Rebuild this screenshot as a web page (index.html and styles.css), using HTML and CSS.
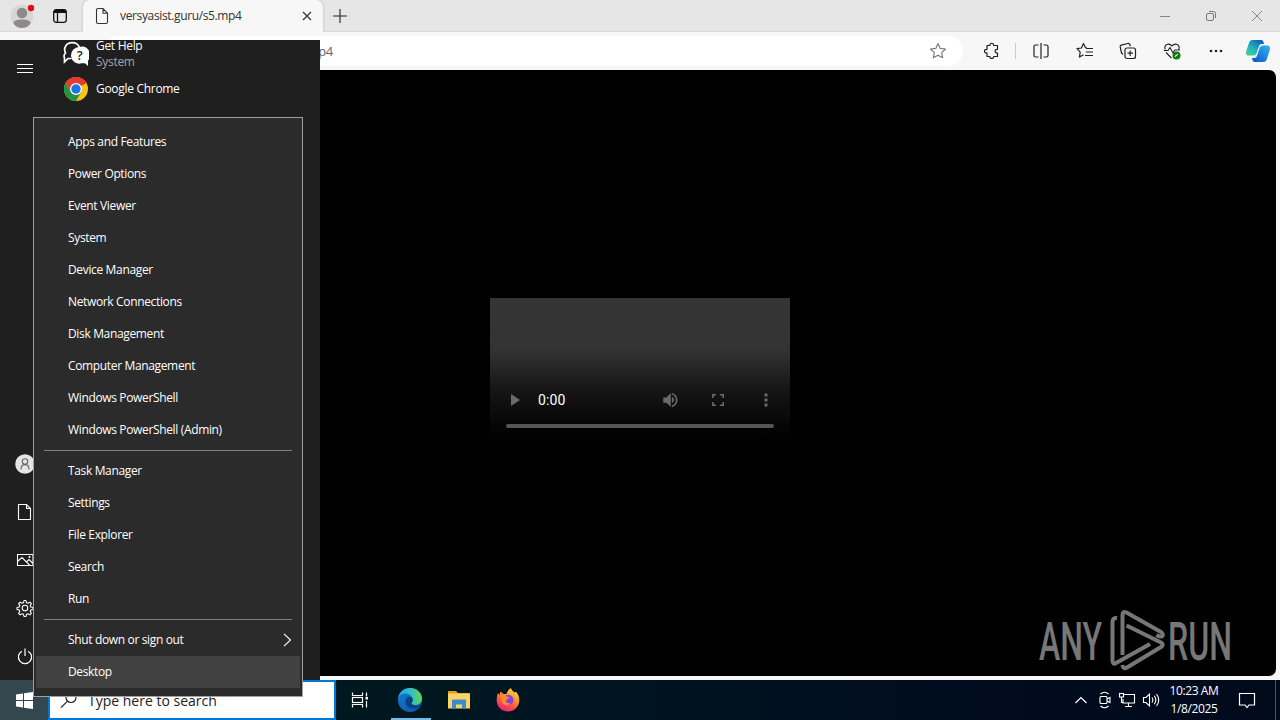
FILE: index.html
```html
<!DOCTYPE html>
<html lang="en">
<head>
    <meta charset="UTF-8">
    <meta name="viewport" content="width=device-width, initial-scale=1.0">
    <title>versyasist.guru/s5.mp4</title>
    <link rel="stylesheet" href="styles.css">
</head>
<body>
    <div class="desktop">
        <div class="browser">
            <div class="tabbar">
                <div class="profile">
                    <svg width="26" height="26" viewBox="0 0 26 26"><circle cx="13" cy="13" r="11.5" fill="#d8d6d4"/><circle cx="13" cy="10" r="5.2" fill="#8d8b89"/><path d="M4.500 20.500c0-3 3.500-4 8.500-4s8.500 1 8.500 4c-2 3-5 4.500-8.500 4.500s-6.500-1.500-8.500-4.500z" fill="#8d8b89"/><circle cx="22" cy="5" r="3.200" fill="#e00b1c"/></svg>
                </div>
                <div class="tab-actions">
                    <svg width="16" height="16" viewBox="0 0 16 16" fill="none" stroke="#111" stroke-width="1.300"><rect x="1.700" y="1.700" width="12.600" height="12.600" rx="2.500"/><path d="M2 3.500h12" stroke-width="3"/><path d="M5.500 4v10"/></svg>
                </div>
                <div class="tab">
                    <svg width="14" height="18" viewBox="0 0 14 18" fill="none" stroke="#333" stroke-width="1.100"><path d="M3 1.500h5l4.500 4.800v8.700c0 .8-.5 1.500-1.500 1.500H3c-1 0-1.500-.7-1.500-1.500V3c0-1 .6-1.500 1.500-1.500zM8 1.500v4.800h4.500"/></svg>
                    <span class="tab-title">versyasist.guru/s5.mp4</span>
                    <svg class="tab-close" width="10" height="10" viewBox="0 0 10 10" stroke="#333" stroke-width="1.200"><path d="M1 1l8 8M9 1l-8 8"/></svg>
                </div>
                <svg class="new-tab" width="14" height="14" viewBox="0 0 14 14" stroke="#222" stroke-width="1.100"><path d="M7 0v14M0 7h14"/></svg>
                <div class="window-buttons">
                    <svg width="12" height="12" viewBox="0 0 12 12" fill="none" stroke="#888"><path d="M1 6.500h10"/></svg>
                    <svg width="12" height="12" viewBox="0 0 12 12" fill="none" stroke="#777"><rect x="1.500" y="3.500" width="7" height="7" rx="1.500"/><path d="M4 1.500h4.500q2 0 2 2V8"/></svg>
                    <svg width="12" height="12" viewBox="0 0 12 12" fill="none" stroke="#888"><path d="M1 1l10 10M11 1L1 11"/></svg>
                </div>
            </div>
            <div class="toolbar">
                <div class="address">
                    <span class="url">https://versyasist.guru/s5.mp4</span>
                    <svg width="18" height="18" viewBox="0 0 18 18" fill="none" stroke="#777" stroke-width="1.100" stroke-linejoin="round"><path d="M9 1.500l2.200 4.900 5.300.6-3.900 3.600 1.100 5.200L9 13.200l-4.700 2.600 1.100-5.200L1.500 7l5.300-.6z"/></svg>
                </div>
                <div class="tools">
                    <svg width="18" height="18" viewBox="0 0 18 18" fill="none" stroke="#222" stroke-width="1.200" stroke-linejoin="round"><path d="M4 3.500h2.800c-.2-3 4.100-3 3.900 0h3.800v3.800c-3.200-.2-3.200 3.900 0 3.700v3.500h-3.800c.2 2.600-4.100 2.600-3.900 0H4V11c-3.400.2-3.400-3.900 0-3.700z"/></svg>
                    <span class="tool-divider"></span>
                    <svg width="18" height="18" viewBox="0 0 18 18" fill="none" stroke="#222" stroke-width="1.200"><path d="M6.500 3H3.500C2.500 3 2 3.500 2 4.500v9c0 1 .5 1.500 1.500 1.500h3M11.500 3h3c1 0 1.500.5 1.500 1.500v9c0 1-.5 1.500-1.500 1.500h-3M9 1v16"/></svg>
                    <svg width="18" height="18" viewBox="0 0 18 18" fill="none" stroke="#222" stroke-width="1.200" stroke-linejoin="round"><path d="M11 6L9.500 5.700 7.500 1.500 5.400 6 1 6.700l3.200 3.400-.8 5L7.500 12.700M10 6.500h7M10 10h7M9 13.500h8"/></svg>
                    <svg width="18" height="18" viewBox="0 0 18 18" fill="none" stroke="#222" stroke-width="1.200"><rect x="6" y="6" width="10.500" height="10.500" rx="2"/><path d="M11.200 8.500v5.500M8.500 11.200H14M4 12.500L2.500 11 1.200 5c-.2-1 .2-1.700 1.100-1.900l6.500-1.600c1-.2 1.800.3 2.100 1.300l.5 1.400"/></svg>
                    <svg width="18" height="18" viewBox="0 0 18 18" fill="none" stroke="#222" stroke-width="1.100"><path d="M2.200 7.500C.5 2.500 6 .3 9 4c3-3.700 8.500-1.500 6.800 3.500M1 8.500h4l2-3 3 5.500 1.800-3H17M3 10.500l5.500 5.500"/><circle cx="13.500" cy="13.500" r="4" fill="#107c10" stroke="none"/><path d="M11.800 14.700l3-2.500" stroke="#fff"/></svg>
                    <svg width="18" height="18" viewBox="0 0 18 18" fill="#222"><circle cx="4" cy="9" r="1.300"/><circle cx="9" cy="9" r="1.300"/><circle cx="14" cy="9" r="1.300"/></svg>
                    <svg class="copilot" width="26" height="26" viewBox="0 0 26 26">
                        <defs>
                            <linearGradient id="cpA" x1="0" y1="1" x2=".7" y2="0"><stop offset="0" stop-color="#4fd37b"/><stop offset=".45" stop-color="#22b9bd"/><stop offset="1" stop-color="#1164b8"/></linearGradient>
                            <linearGradient id="cpB" x1="0" y1="1" x2="1" y2="0"><stop offset="0" stop-color="#0754c8"/><stop offset="1" stop-color="#34b5f4"/></linearGradient>
                        </defs>
                        <path d="M8 2h8c2 0 2.500 1.500 3 4h-2c-2 0-2.700 1-3.300 3l-2 6c-.6 2-1.700 2.500-4 2.500H4C1 17.500.5 15.500 1.300 13l2.500-7.500C4.700 3 5.500 2 8 2z" fill="url(#cpA)"/>
                        <path d="M18 24h-8c-2 0-2.500-1.500-3-4h2c2 0 2.700-1 3.300-3l2-6c.6-2 1.700-3.500 4-3.500H22c3 0 3.500 2 2.700 5l-2.500 7.500C21.300 23 20.500 24 18 24z" fill="url(#cpB)"/>
                    </svg>
                </div>
            </div>
            <div class="page">
                <div class="video">
                    <div class="controls">
                        <svg class="play" width="24" height="24" viewBox="0 0 24 24" fill="#6a6a6a"><path d="M8 6v12l9-6z"/></svg>
                        <span class="time">0:00</span>
                        <svg width="18" height="18" viewBox="0 0 24 24" fill="#6a6a6a"><path d="M3 8.500v7h4l6 5.500V3L7 8.500zM14.500 7.800v8.400c1.800-.9 2.800-2.400 2.800-4.200s-1-3.300-2.800-4.200zM14.500 2.500v2.300c3.200.9 5.300 3.700 5.300 7.200s-2.100 6.300-5.300 7.200v2.300c4.500-1 7.500-4.800 7.500-9.500s-3-8.500-7.500-9.500z"/></svg>
                        <svg width="18" height="18" viewBox="0 0 18 18" fill="none" stroke="#6a6a6a" stroke-width="1.600"><path d="M3.800 7V3.800H7M11 3.800h3.200V7M14.200 11v3.200H11M7 14.200H3.800V11"/></svg>
                        <svg width="18" height="18" viewBox="0 0 18 18" fill="#6a6a6a"><circle cx="9" cy="4" r="1.700"/><circle cx="9" cy="9" r="1.700"/><circle cx="9" cy="14" r="1.700"/></svg>
                    </div>
                    <div class="timeline"></div>
                </div>
                <svg class="watermark" width="200" height="66" viewBox="0 0 200 66">
                    <g fill="#777" font-family="Roboto, sans-serif" font-size="53" font-weight="500">
                        <text x="2" y="51.500" textLength="63" lengthAdjust="spacingAndGlyphs">ANY</text>
                        <text x="131" y="51.500" textLength="64" lengthAdjust="spacingAndGlyphs">RUN</text>
                    </g>
                    <g fill="none" stroke="#777" stroke-width="4" stroke-linejoin="round" stroke-linecap="butt">
                        <path d="M80 10q-4.500-.5-4.500 4v38.500q0 4.500 3.500 2.500L113 36"/>
                        <path d="M85.500 47V7q0-4.500 4-2.500L124 24q3.500 3 .5 4.500-2 .5-5-1.500"/>
                        <path d="M89.500 17.500L124 34.500q3.500 2 0 4.500L90 59.500q-4 2.500-4.500-2.500"/>
                    </g>
                </svg>
            </div>
        </div>

        <div class="taskbar">
            <div class="start-button">
                <svg width="17" height="17" viewBox="0 0 17 17" fill="#fff"><path d="M0 2.400l7-1V8H0zM8 1.200L17 0v8H8zM0 9h7v6.600l-7-1zM8 9h9v8l-9-1.300z"/></svg>
            </div>
            <div class="search">
                <svg width="18" height="18" viewBox="0 0 18 18" fill="none" stroke="#222" stroke-width="1.200"><circle cx="11" cy="6.500" r="5"/><path d="M7.500 10.200L1 16.700"/></svg>
                <span class="search-text">Type here to search</span>
            </div>
            <div class="task">
                <svg width="18" height="18" viewBox="0 0 18 18" fill="none" stroke="#fff" stroke-width="1.200"><path d="M1.500 1.500v3h10v-3M1.500 16.500v-3h10v3M15.500 1.500v4M15.500 10v6.500"/><rect x="1.500" y="6.500" width="10" height="5"/><rect x="14.500" y="6" width="2.500" height="2.500" fill="#fff" stroke="none"/></svg>
            </div>
            <div class="task active">
                <svg width="26" height="26" viewBox="0 0 26 26">
                    <defs>
                        <linearGradient id="edA" x1="0" y1=".5" x2="1" y2=".4"><stop offset="0" stop-color="#1f9de0"/><stop offset=".5" stop-color="#2dbfd0"/><stop offset="1" stop-color="#62d64b"/></linearGradient>
                        <linearGradient id="edB" x1="0" y1="0" x2=".6" y2="1"><stop offset="0" stop-color="#1580d6"/><stop offset="1" stop-color="#0c5cae"/></linearGradient>
                    </defs>
                    <circle cx="13" cy="13" r="12" fill="url(#edB)"/>
                    <path d="M1.200 11C2 5 7 1 13 1c7 0 12 5 12 10.500 0 4-3 6.500-6.500 6.500-2.500 0-4-.8-4-1.700 0-.8 1.300-1.300 1.300-3.300C15.800 9 12 6.500 8.500 6.500 5 6.500 2.500 8.500 1.200 11z" fill="url(#edA)"/>
                    <path d="M8.500 15c0-3 1.800-5.200 4.500-5.200 1.700 1 2.800 2 2.800 3.300 0 1.700-1.300 2.300-1.300 3.200 0 1.500 3 2.700 6 2 1.500-.3 2.500-.9 3.300-1.400-1 2.700-3.500 4.500-7.300 4.500-4.500 0-8-2.500-8-6.400z" fill="#0d3f82"/>
                </svg>
            </div>
            <div class="task">
                <svg width="24" height="22" viewBox="0 0 24 22"><path d="M1 2h8l2 2h11.500v5H1z" fill="#e89c1c"/><path d="M1 4.500h22v15H1z" fill="#fbd468"/><path d="M5 19.500v-8q0-1 1-1h12q1 0 1 1v8h-4v-4H9v4z" fill="#3a8dc8"/></svg>
            </div>
            <div class="task">
                <svg width="26" height="26" viewBox="0 0 26 26">
                    <defs>
                        <linearGradient id="ffA" x1=".8" y1="0" x2=".3" y2="1"><stop offset="0" stop-color="#ffe040"/><stop offset=".4" stop-color="#ff9428"/><stop offset=".75" stop-color="#ff4150"/><stop offset="1" stop-color="#e3227a"/></linearGradient>
                    </defs>
                    <path d="M3 6l1.500 2L5.500 4.500 8.500 7h3c1-3 2.500-5 4.500-6 .2 2 2 3 3.500 4.500L21 4.800c2 2.300 3.500 5 3.300 8.700C24 20 19 24.500 13 24.500S1.700 20 1.700 13.500C1.700 10.500 2 8.500 3 6z" fill="url(#ffA)"/>
                    <circle cx="13.500" cy="13" r="5" fill="#7c45dc"/>
                    <path d="M5 10c2-2 5-2 7-.5l2.500 1c-.8 1.800-3 1.500-3.500 3-.3 2 2 3.200 4.500 2.500-1.500 3.500-8 3-9-2z" fill="#ff8a2a"/>
                </svg>
            </div>
            <div class="tray">
                <svg width="14" height="18" viewBox="0 0 14 18" fill="none" stroke="#fff" stroke-width="1.200"><path d="M1.500 12L7 6.500l5.500 5.500"/></svg>
                <svg width="14" height="18" viewBox="0 0 14 18" fill="none" stroke="#fff" stroke-width="1.100"><rect x="2" y="5.500" width="7" height="7" rx="1"/><path d="M9 8l3-1.500v5L9 10M2.500 3q4-3.500 8 0M2.500 15q4 3.500 8 0"/></svg>
                <svg width="18" height="18" viewBox="0 0 18 18" fill="none" stroke="#fff" stroke-width="1.100"><path d="M6 3.500h10.500v8.500H5V8M10.500 12v3.500M7 15.500h7"/><rect x="1.500" y="2.500" width="4" height="3.500"/><path d="M3.500 6v5.500h1.500"/></svg>
                <svg width="18" height="18" viewBox="0 0 18 18" fill="none" stroke="#fff" stroke-width="1.100"><path d="M1.500 6.500H4l3.500-3.500v12L4 11.500H1.500zM10 6.500q1.700 2.500 0 5M12.300 4.800q3 4.200 0 8.400M14.500 3q4.500 6 0 12"/></svg>
                <div class="clock">
                    <span>10:23 AM</span>
                    <span>1/8/2025</span>
                </div>
                <svg class="notify" width="18" height="18" viewBox="0 0 18 18" fill="none" stroke="#fff" stroke-width="1.200"><path d="M1.500 2.500h15v11.500H11l-2 2.500-2-2.500H1.500z"/></svg>
            </div>
        </div>

        <div class="start-menu">
            <div class="rail">
                <svg class="burger" width="16" height="10" viewBox="0 0 16 10" stroke="#fff"><path d="M0 .5h16M0 4.500h16M0 8.500h16"/></svg>
                <div class="rail-bottom">
                    <svg width="20" height="20" viewBox="0 0 20 20" fill="none"><circle cx="10" cy="10" r="9.800" fill="#e4e4e4"/><g stroke="#666" stroke-width="1.100"><circle cx="10" cy="7.500" r="2.700"/><path d="M6 15.500c0-6.500 8-6.500 8 0"/></g></svg>
                    <svg width="20" height="20" viewBox="0 0 20 20" fill="none" stroke="#fff" stroke-width="1.100"><path d="M3.500 2.500h8l4 4v11h-12zM11.500 2.500v4h4"/></svg>
                    <svg width="20" height="20" viewBox="0 0 20 20" fill="none" stroke="#fff" stroke-width="1.100"><path d="M2.500 4.500h15.500v11H2.500zM2.500 11.500L7 7.500l8 8M11.500 12l2.500-2.500 4 4"/><circle cx="14.500" cy="7" r=".5"/></svg>
                    <svg width="20" height="20" viewBox="0 0 20 20" fill="none" stroke="#fff" stroke-width="1.100" stroke-linejoin="round"><circle cx="10" cy="10" r="2.800"/><path d="M9 2.500h2l.5 2.200 1.500.6 1.900-1.200 1.500 1.500L15.200 7.500l.6 1.500 2.200.5v2l-2.200.5-.6 1.500 1.200 1.900-1.500 1.500-1.900-1.200-1.500.6-.5 2.200H9l-.5-2.200-1.500-.6-1.900 1.200-1.500-1.500 1.200-1.900-.6-1.500L2 11.500v-2L4.200 9l.6-1.500-1.200-1.900 1.500-1.500L7 5.300l1.500-.6z"/></svg>
                    <svg width="20" height="20" viewBox="0 0 20 20" fill="none" stroke="#fff" stroke-width="1.200"><path d="M7 5.200a6.600 6.600 0 1 0 6 0M10 2.500V10"/></svg>
                </div>
            </div>
            <div class="app-list">
                <div class="app">
                    <svg width="26" height="26" viewBox="0 0 26 26"><path d="M8.500 17.500H5L1.500 21V17C.8 15.500 1 13.500 2.500 12 0 7 3.500 1.700 9 1.700c3.500 0 6.500 2 7.500 5" fill="none" stroke="#fff" stroke-width="1.700"/><path d="M16.500 6a8.300 8.300 0 1 0 2 16.300h3.500l3 2.700v-5.500A8.300 8.300 0 0 0 16.500 6z" fill="#fff"/><text x="16.700" y="19" text-anchor="middle" font-family="Open Sans, sans-serif" font-size="13" font-weight="600" fill="#1f1f1f">?</text></svg>
                    <div class="app-name">Get Help<span>System</span></div>
                </div>
                <div class="app">
                    <svg width="26" height="26" viewBox="0 0 26 26"><circle cx="13" cy="13" r="12" fill="#fbc116"/><path d="M13 13L2.600 7A12 12 0 0 1 23.400 7z" fill="#e33b2e"/><path d="M13 7h10.400A12 12 0 0 0 2.600 7l5.200 9z" fill="#e33b2e"/><path d="M2.600 7a12 12 0 0 0 10.400 18l5.200-9H7.800z" fill="#229342"/><circle cx="13" cy="13" r="6" fill="#fff"/><circle cx="13" cy="13" r="4.700" fill="#1a73e8"/></svg>
                    <div class="app-name">Google Chrome</div>
                </div>
            </div>
        </div>

        <div class="context-menu">
            <div class="item">Apps and Features</div>
            <div class="item">Power Options</div>
            <div class="item">Event Viewer</div>
            <div class="item">System</div>
            <div class="item">Device Manager</div>
            <div class="item">Network Connections</div>
            <div class="item">Disk Management</div>
            <div class="item">Computer Management</div>
            <div class="item">Windows PowerShell</div>
            <div class="item">Windows PowerShell (Admin)</div>
            <div class="separator"></div>
            <div class="item">Task Manager</div>
            <div class="item">Settings</div>
            <div class="item">File Explorer</div>
            <div class="item">Search</div>
            <div class="item">Run</div>
            <div class="separator"></div>
            <div class="item">Shut down or sign out
                <svg width="9" height="14" viewBox="0 0 9 14" fill="none" stroke="#fff" stroke-width="1.100"><path d="M1 .8L7.500 7 1 13.200"/></svg>
            </div>
            <div class="item selected">Desktop</div>
        </div>
    </div>
</body>
</html>
```
FILE: styles.css
```css
* {
    box-sizing: border-box;
}

body {
    margin: 0;
    font-family: "Open Sans", "Noto Sans", sans-serif;
    font-size: 12px;
}

svg {
    display: block;
    flex: none;
}

.desktop {
    position: relative;
    display: flex;
    flex-direction: column;
    width: 1280px;
    height: 720px;
    overflow: hidden;
}

/* browser window */
.browser {
    display: flex;
    flex-direction: column;
    height: 680px;
    background: #f7f7f7;
}

.tabbar {
    display: flex;
    align-items: center;
    height: 32px;
    background: #e6e6e6;
    border-bottom: 1px solid #dadada;
}

.profile {
    margin-left: 9px;
}

.tab-actions {
    margin-left: 17px;
}

.tab {
    display: flex;
    align-items: center;
    align-self: stretch;
    width: 240px;
    height: 32px;
    margin-left: 15px;
    padding: 0 11px 0 12px;
    background: #f7f7f7;
    border-radius: 7px 7px 0 0;
    box-shadow: 0 0 3px rgba(0, 0, 0, 0.2);
    clip-path: inset(0 -4px 0 -4px);
}

.tab-title {
    margin-left: 11px;
    padding-bottom: 1px;
    color: #333;
    letter-spacing: -0.36px;
}

.tab-close {
    margin-left: auto;
}

.new-tab {
    margin-left: 10px;
}

.window-buttons {
    display: flex;
    gap: 34px;
    margin-left: auto;
    margin-right: 17px;
}

.toolbar {
    display: flex;
    align-items: center;
    height: 38px;
}

.address {
    display: flex;
    align-items: center;
    justify-content: space-between;
    width: 859px;
    height: 30px;
    margin-left: 104px;
    padding: 0 16px 0 48px;
    background: #fff;
    border-radius: 15px;
}

.url {
    width: 181px;
    text-align: right;
    font-size: 13px;
    letter-spacing: -0.3px;
    color: #666;
    white-space: nowrap;
}

.tools {
    display: flex;
    align-items: center;
    justify-content: space-between;
    flex: 1;
    padding: 0 9px 0 20px;
}

.tool-divider {
    width: 1px;
    height: 16px;
    margin: 0 -10px 0 -12px;
    background: #ccc;
}

.copilot {
    margin-left: -6px;
}

.page {
    position: relative;
    display: flex;
    align-items: center;
    justify-content: center;
    height: 606px;
    margin: 0 4px;
    background: #000;
    border-radius: 7px;
}

.video {
    display: flex;
    flex-direction: column;
    justify-content: flex-end;
    width: 300px;
    height: 150px;
    padding: 0 16px 20px;
    background: linear-gradient(#353535 0, #333 35%, #151515 62%, #050505 85%, #000 95%);
}

.controls {
    display: flex;
    align-items: center;
    gap: 30px;
    height: 24px;
    margin-right: -1px;
    margin-bottom: 12px;
}

.play {
    margin-left: -3px;
}

.time {
    flex: 1;
    margin-left: -19px;
    font-family: Roboto, sans-serif;
    font-size: 14px;
    letter-spacing: 0.15px;
    color: #fff;
}

.timeline {
    height: 4px;
    border-radius: 2px;
    background: #555;
}

.watermark {
    position: absolute;
    right: 39px;
    bottom: 2px;
}

/* taskbar */
.taskbar {
    display: flex;
    height: 40px;
    background: linear-gradient(90deg, #001a21 0, #001720 35%, #000c1f 75%, #000a1b 100%);
    color: #fff;
}

.start-button {
    display: flex;
    align-items: center;
    justify-content: center;
    width: 48px;
    background: #34474f;
}

.search {
    display: flex;
    align-items: center;
    width: 288px;
    padding: 0 10px;
    background: #fff;
    border: 2px solid #0078d7;
}

.search-text {
    margin-left: 10px;
    font-size: 14px;
    color: #222;
}

.task {
    display: flex;
    align-items: center;
    justify-content: center;
    width: 49px;
    margin-left: -1px;
}

.task + .task {
    margin-left: 0;
}

.task.active {
    position: relative;
    width: 52px;
}

.task.active + .task {
    margin-left: -2px;
}

.task.active::after {
    content: "";
    position: absolute;
    bottom: 0;
    left: 7px;
    width: 40px;
    height: 2px;
    background: #76b9ed;
}

.tray {
    display: flex;
    align-items: center;
    gap: 6px;
    margin-left: auto;
    padding-right: 19px;
    border-right: 1px solid #4b5462;
    margin-right: 4px;
}

.tray svg:first-child {
    margin-left: -6px;
    margin-right: -2px;
}

.tray svg:first-child + svg {
    margin-left: 6px;
}

.clock {
    display: flex;
    flex-direction: column;
    width: 58px;
    margin: 0 9px 0 -1px;
    line-height: 18px;
    text-align: center;
    letter-spacing: -0.4px;
    white-space: nowrap;
}

/* start menu */
.start-menu {
    position: absolute;
    top: 40px;
    left: 0;
    display: flex;
    width: 320px;
    height: 640px;
    overflow: hidden;
    background: #1f1f1f;
    color: #fff;
}

.rail {
    display: flex;
    flex-direction: column;
    justify-content: space-between;
    align-items: center;
    width: 50px;
    padding: 24px 0 14px;
}

.rail-bottom {
    display: flex;
    flex-direction: column;
    gap: 28px;
}

.app-list {
    padding-left: 13px;
}

.app {
    display: flex;
    align-items: center;
    height: 36px;
}

.app:first-child {
    height: 27px;
    margin-bottom: 4px;
}

.app-name {
    margin-left: 7px;
    line-height: 16px;
    font-weight: 500;
    letter-spacing: -0.3px;
}

.app-name span {
    display: block;
    color: #a5a5a5;
}

/* Win+X menu */
.context-menu {
    position: absolute;
    top: 117px;
    left: 33px;
    width: 270px;
    height: 580px;
    padding: 8px 2px;
    background: #2b2b2b;
    border: 1px solid #a0a0a0;
    color: #fff;
}

.item {
    display: flex;
    align-items: center;
    justify-content: space-between;
    height: 32px;
    padding: 0 8px 1px 32px;
    font-weight: 500;
    letter-spacing: -0.35px;
}

.item.selected {
    background: #414141;
}

.separator {
    height: 1px;
    margin: 4px 8px;
    background: #808080;
}
```
